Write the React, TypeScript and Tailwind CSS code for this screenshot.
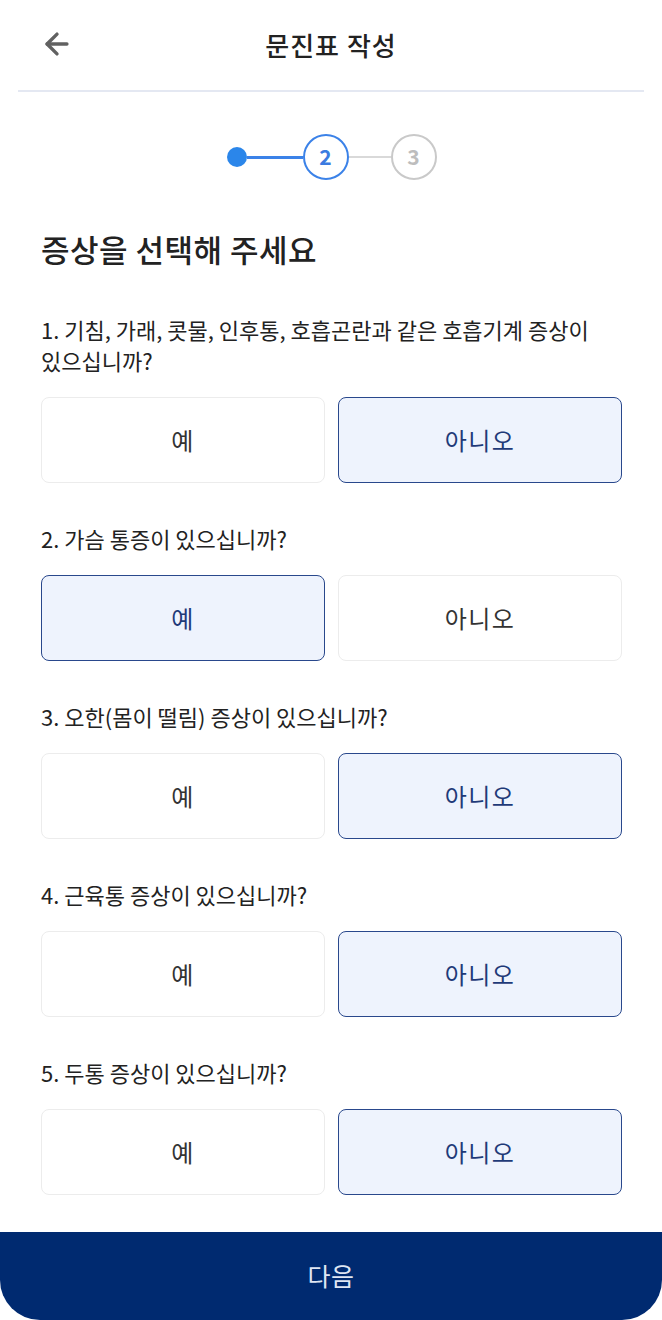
import { ArrowLeft } from 'lucide-react';

type Answer = 'yes' | 'no';

const questions: { text: string; answer: Answer }[] = [
  { text: '1. 기침, 가래, 콧물, 인후통, 호흡곤란과 같은 호흡기계 증상이 있으십니까?', answer: 'no' },
  { text: '2. 가슴 통증이 있으십니까?', answer: 'yes' },
  { text: '3. 오한(몸이 떨림) 증상이 있으십니까?', answer: 'no' },
  { text: '4. 근육통 증상이 있으십니까?', answer: 'no' },
  { text: '5. 두통 증상이 있으십니까?', answer: 'no' },
];

function Choice({ label, selected }: { label: string; selected: boolean }) {
  return (
    <button
      className={
        selected
          ? 'h-[86px] rounded-lg border-[1.5px] border-[#29488c] bg-[#eef3fd] text-[24px] tracking-[1.5px] text-[#1f3a78]'
          : 'h-[86px] rounded-lg border-[1.5px] border-[#ececec] bg-white text-[24px] tracking-[1.5px] text-[#333]'
      }
    >
      {label}
    </button>
  );
}

function Stepper() {
  return (
    <div className="flex items-center justify-center">
      <div className="h-[20px] w-[20px] rounded-full bg-[#2b86ea]" />
      <div className="h-[3px] w-[56px] bg-[#3b82e8]" />
      <div className="flex h-[46px] w-[46px] items-center justify-center rounded-full border-2 border-[#3b82e8] text-[21px] font-bold text-[#3b7be0]">
        2
      </div>
      <div className="h-[2px] w-[42px] bg-[#d9d9d9]" />
      <div className="flex h-[46px] w-[46px] items-center justify-center rounded-full border-2 border-[#c9c9c9] text-[21px] font-bold text-[#bdbdbd]">
        3
      </div>
    </div>
  );
}

export default function App() {
  return (
    <div
      className="flex h-[1320px] w-[662px] flex-col overflow-hidden rounded-[40px] bg-white"
      style={{ fontFamily: '"Noto Sans CJK KR", "Noto Sans", sans-serif' }}
    >
      <header className="mx-[18px] flex h-[92px] items-center border-b-2 border-[#e4e8f2]">
        <div className="relative flex w-full items-center justify-center pb-[2px]">
          <button className="absolute left-[22px] text-[#616161]">
            <ArrowLeft size={34} strokeWidth={2.4} />
          </button>
          <h1 className="text-[26px] font-medium tracking-[1px] text-[#222]">문진표 작성</h1>
        </div>
      </header>

      <div className="flex-1 pl-[41px] pr-[40px]">
        <div className="mt-[42px]">
          <Stepper />
        </div>

        <h2 className="mt-[50px] text-[31px] font-medium leading-[38px] tracking-[0.5px] text-[#222]">
          증상을 선택해 주세요
        </h2>

        <div className="mt-[46px] flex flex-col gap-[40px]">
          {questions.map((q) => (
            <div key={q.text}>
              <p className="break-keep text-[22px] leading-[31px] text-[#222]">{q.text}</p>
              <div className="mt-[21px] grid grid-cols-2 gap-[13px]">
                <Choice label="예" selected={q.answer === 'yes'} />
                <Choice label="아니오" selected={q.answer === 'no'} />
              </div>
            </div>
          ))}
        </div>
      </div>

      <button className="h-[88px] w-full bg-[#002a70] text-[25px] tracking-[0.5px] text-[#dfe6f3]">다음</button>
    </div>
  );
}
